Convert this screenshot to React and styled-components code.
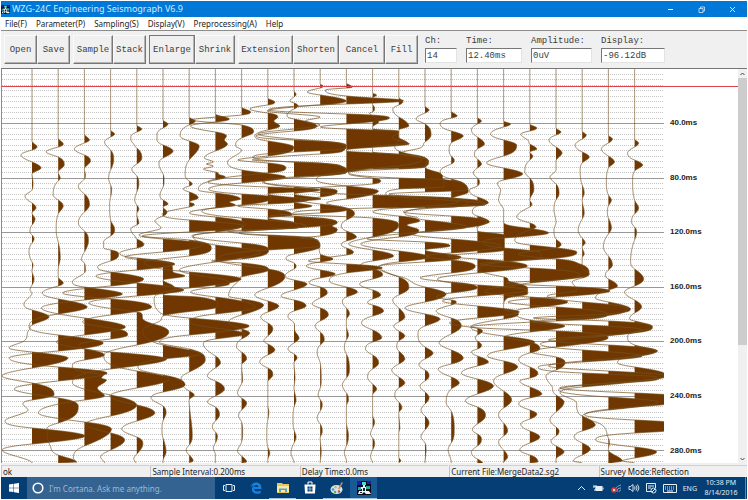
import styled, { createGlobalStyle } from "styled-components";

const GlobalStyle = createGlobalStyle`
    * {
        box-sizing: border-box;
    }

    body {
        margin: 0;
        background: #ffffff;
        font-family: "Noto Sans", "Open Sans", sans-serif;
        color: #222222;
    }

    button, input {
        font: inherit;
        color: inherit;
        border: none;
        margin: 0;
        padding: 0;
        background: none;
        border-radius: 0;
    }
`;

const Window = styled.div`
    min-height: 100vh;
    padding: 1px;
    display: flex;
    flex-direction: column;
`;

const TitleBar = styled.header`
    height: 16px;
    display: flex;
    align-items: center;
    gap: 2px;
    background: #0078d7;
    color: #ffffff;
`;

const Title = styled.h1`
    flex: 1;
    margin: 0;
    font-size: 9px;
    line-height: 16px;
    font-weight: 400;
    color: #d5e9fa;
`;

const WindowButton = styled.button`
    width: 29px;
    height: 16px;
    display: flex;
    align-items: center;
    justify-content: center;
`;

const MenuBar = styled.nav`
    height: 13px;
    display: flex;
    gap: 9px;
    padding-left: 4px;
    background: #ffffff;
`;

const MenuItem = styled.button`
    font-size: 8px;
    line-height: 12px;
`;

const ToolBar = styled.div`
    height: 38px;
    display: flex;
    align-items: flex-start;
    padding: 4px 3px 0;
    background: #f0f0f0;
    border-top: 1px solid #8c8c8c;
    font-family: "Liberation Mono", monospace;
    font-size: 9px;
`;

const ButtonGroup = styled.div`
    display: flex;
    margin-right: 3px;
`;

const ToolButton = styled.button`
    width: ${(props) => props.$width}px;
    height: 29px;
    white-space: nowrap;
    color: #3c3c3c;
    border: 1px solid;
    border-color: ${(props) => (props.$active ? "#777777" : "#fafafa #777777 #777777 #fafafa")};
    box-shadow: inset -1px -1px 0 #b4b4b4;
`;

const Fields = styled.div`
    display: flex;
    gap: 9px;
    margin-left: 4px;
`;

const Field = styled.label`
    display: flex;
    flex-direction: column;
    color: #3c3c3c;
    line-height: 13px;
`;

const FieldInput = styled.input`
    width: ${(props) => props.$width}px;
    height: 15px;
    padding: 0 1px;
    background: #ffffff;
    border: 1px solid;
    border-color: #777777 #e3e3e3 #e3e3e3 #777777;
`;

const Workspace = styled.main`
    flex: 1;
    display: flex;
    border-top: 1px solid #777777;
    border-left: 1px solid #8c8c8c;
`;

const Plot = styled.svg`
    flex: 1;
    min-width: 0;
    display: block;
    align-self: flex-start;
`;

const TimeLabel = styled.text`
    font-family: "Liberation Sans", Arial, sans-serif;
    font-size: 8px;
    font-weight: 700;
    fill: #222222;
`;

const ScrollBar = styled.div`
    width: 9px;
    display: flex;
    flex-direction: column;
    background: #f0f0f0;
`;

const ScrollButton = styled.button`
    height: 9px;
    display: flex;
    align-items: center;
    justify-content: center;
`;

const ScrollTrack = styled.div`
    flex: 1;
`;

const ScrollThumb = styled.div`
    height: 71%;
    background: #cdcdcd;
`;

const StatusBar = styled.footer`
    height: 14px;
    display: grid;
    grid-template-columns: repeat(5, 1fr);
    gap: 1px;
    padding-top: 2px;
    background: #f0f0f0;
`;

const StatusCell = styled.div`
    padding-left: 1px;
    font-size: 8px;
    line-height: 11px;
    white-space: nowrap;
    border-left: 1px solid #c4c4c4;
    border-top: 1px solid #d0d0d0;
`;

const TaskBar = styled.div`
    height: 22px;
    display: flex;
    background: #043e74;
    color: #e6eef5;
`;

const TaskButton = styled.button`
    width: ${(props) => props.$width || 27}px;
    display: flex;
    align-items: center;
    justify-content: center;
    background: ${(props) => (props.$active ? "#175a94" : "transparent")};
    border-bottom: 1px solid ${(props) => (props.$open ? "#9cc4e6" : "transparent")};
`;

const Search = styled.label`
    width: 188px;
    display: flex;
    align-items: center;
    gap: 5px;
    padding-left: 5px;
    background: #356391;
`;

const SearchInput = styled.input`
    flex: 1;
    min-width: 0;
    font-size: 8px;

    &::placeholder {
        color: #9fb8cf;
        opacity: 1;
    }
`;

const Tray = styled.div`
    display: flex;
    align-items: center;
    gap: 6px;
    margin-left: auto;
    font-size: 7px;
`;

const Clock = styled.time`
    width: 36px;
    text-align: center;
    line-height: 10px;
`;

const ShowDesktop = styled.button`
    width: 2px;
    height: 22px;
    border-left: 1px solid #5e86ab;
`;

// one line per channel, "time position:deflection" along the trace
const CHANNELS = [
    "141:0 147:5 150:0 155:-11 162:0 168:9 174:0 183:1 190:0 196:-7 203:0 208:4 213:0 219:3 225:0 232:-2 235:0 239:2 243:0 252:-3 262:0 265:1 271:0 279:2 285:0 290:-2 293:0 304:-8 310:0 317:17 325:0 330:-3 341:-8 348:-23 352:0 358:36 368:0 376:-30 383:0 395:22 400:0 404:-9 410:-4 421:-27 428:0 436:53 444:0 450:-30 463:0",
    "138:0 144:5 147:0 152:-12 157:0 165:6 172:0 178:2 181:0 195:-5 200:0 206:5 214:0 230:-2 242:0 258:2 270:0 277:0 283:5 286:0 293:-16 299:0 307:29 314:0 327:-29 335:0 343:45 351:0 358:-49 367:0 373:49 381:0 389:-44 398:0 407:20 423:0 428:-11 446:-8 455:0 462:18",
    "134:0 140:5 143:0 149:-10 155:0 161:6 169:0 175:1 179:0 186:-6 194:0 199:4 205:5 212:0 223:-6 231:0 241:4 252:0 260:-3 263:0 270:1 273:0 282:-12 287:0 294:38 300:0 308:-43 318:0 327:41 335:0 342:-28 349:0 355:20 360:0 366:-12 372:0 375:19 378:17 380:22 388:13 396:20 400:0 413:-46 422:0 429:27 446:0 458:-11 463:-8",
    "130:0 134:4 137:0 142:-6 150:0 160:3 170:0 178:-2 185:0 190:1 197:0 205:-1 220:0 229:4 236:0 242:-7 248:-7 250:0 254:8 261:0 267:-13 272:0 279:33 286:0 293:-48 299:0 307:41 315:0 322:-28 328:0 335:17 339:0 345:-32 352:0 359:56 369:0 383:-38 395:0 405:26 416:0 424:-25 433:0 440:14 450:0 457:-10 463:-6",
    "125:0 129:5 132:0 137:-6 143:-4 148:0 158:5 164:0 169:-5 176:0 184:2 192:0 200:-2 205:0 209:2 214:0 223:2 225:0 229:-6 236:-2 239:0 244:7 248:0 253:-17 258:0 264:38 270:0 276:-41 283:0 290:47 296:0 303:-48 312:0 314:5 319:6 325:20 332:32 345:0 355:-33 371:0 379:33 388:0 396:-27 405:0 413:18 421:0 429:-15 437:0 444:6 454:0 459:-3 463:-1",
    "120:0 124:5 128:0 134:-6 139:-6 145:0 151:10 158:0 164:-4 174:0 180:1 187:0 195:-3 200:0 204:5 207:0 212:4 216:0 221:-8 228:-2 235:-24 239:0 244:40 252:0 257:-38 262:0 266:9 272:10 276:22 280:0 285:9 290:12 295:0 297:35 305:55 310:40 316:0 321:-3 330:-20 345:0 354:38 359:0 368:-25 375:0 385:22 392:0 398:-12 406:0 413:3 421:0 430:-1 438:0 452:3 461:0",
    "117:0 121:6 125:0 136:-9 141:0 146:10 160:0 175:-4 181:0 184:3 186:0 189:-6 192:0 198:9 202:0 204:5 207:0 214:-27 220:0 226:55 232:0 236:-47 240:0 248:22 256:0 262:-45 272:0 279:52 288:0 299:-35 312:-30 318:0 326:60 335:0 342:-30 349:0 360:16 372:0 378:-8 391:0 395:5 400:0 435:3 445:0 450:-3 455:0 461:4",
    "114:0 119:14 122:0 126:-25 132:0 136:11 140:9 144:12 151:0 158:-11 162:-2 164:-9 166:-2 168:-9 169:-12 172:0 175:5 177:10 180:0 190:-17 193:0 199:25 202:14 205:20 208:0 213:-26 217:0 224:30 232:0 236:-22 245:0 252:45 262:0 270:-36 278:0 284:14 287:0 292:-25 297:0 307:40 314:0 322:-25 328:0 334:30 339:0 344:-12 356:0 363:5 368:0 376:-8 381:0 389:9 396:0 402:-8 407:0 415:4 421:0 427:-3 432:0 436:2 443:0 448:-2 455:0",
    "107:0 112:9 115:0 120:-50 125:0 132:12 138:0 146:-6 150:0 162:-14 170:0 177:44 183:0 189:-33 194:0 197:30 205:0 211:-40 218:0 226:65 231:0 236:-50 243:0 250:27 259:0 261:-30 263:0 270:27 277:0 283:-5 296:-13 299:0 305:22 315:0 322:-13 329:0 333:8 339:0 347:-5 352:0 359:5 365:0 380:1 393:-4 398:0 403:5 410:0 416:-3 422:0 432:1 442:0 451:-4 456:0 462:5",
    "98:0 102:7 105:0 109:-18 113:0 117:10 121:6 126:12 130:0 136:-13 141:0 147:26 156:0 160:-30 163:0 168:18 173:0 182:-60 187:0 190:50 194:0 200:40 204:0 206:-30 209:0 215:24 218:0 222:25 228:30 231:-40 235:0 238:45 246:52 250:0 260:-50 269:0 277:17 288:0 295:-13 301:0 306:11 312:0 317:-7 323:0 329:5 336:0 341:-4 344:0 350:7 355:0 362:-8 368:0 375:5 382:0 405:0 412:1 420:0 435:-1 447:0 453:2 460:0",
    "91:0 94:2 97:0 101:-4 103:0 106:4 109:0 116:-7 119:0 126:23 131:0 136:-38 140:0 143:45 148:52 152:0 157:-41 162:0 165:45 173:52 177:0 182:-30 187:0 190:26 194:0 199:27 202:0 206:18 209:0 212:-15 216:0 222:43 228:0 233:-55 237:0 240:22 247:26 254:0 259:-8 263:0 267:2 269:0 276:-9 280:0 284:13 290:0 296:-13 300:0 306:12 311:0 317:-6 323:0 331:1 338:5 343:0 349:-6 354:0 358:3 363:0 378:1 388:0 400:2 407:0 420:-1 430:0 437:2 443:0 453:-3 463:0",
    "84:0 86:3 88:0 92:-13 95:0 101:26 105:0 111:-53 117:0 121:-15 125:0 134:-62 141:0 145:26 150:24 154:0 160:-68 163:0 171:27 176:0 182:-58 188:0 191:17 197:0 200:-20 204:0 209:27 213:0 216:-50 218:0 223:17 226:12 229:17 236:0 238:-20 240:-2 254:0 259:13 262:0 266:-14 270:0 274:15 278:0 283:-11 287:0 293:7 298:0 304:-8 308:0 315:8 321:0 326:-5 332:0 340:4 345:0 353:-3 363:0 380:1 388:0 395:-2 404:2 411:0 418:-3 424:0 432:2 438:0 452:1 463:0",
    "83:0 87:6 88:0 90:-21 96:0 99:45 101:57 104:0 110:-78 114:0 118:43 124:0 127:-26 129:0 132:52 138:46 144:63 150:0 151:0 154:50 160:75 168:30 172:0 180:-30 186:0 191:32 199:0 203:-20 208:0 214:8 220:0 226:-5 231:0 237:10 241:0 245:-5 248:0 252:7 255:0 261:-38 264:0 268:36 273:0 281:-17 287:0 292:11 297:0 302:-4 308:0 314:3 320:0 326:0 335:2 340:0 348:-2 354:0 370:3 378:0 385:-4 393:0 400:2 406:0 422:0 435:2 446:0 453:-2 461:0",
    "93:0 95:4 98:0 104:0 108:2 112:0 113:-3 116:0 122:6 127:0 129:0 131:26 137:26 143:35 147:0 152:0 156:45 162:56 167:52 169:0 171:-24 174:-24 178:0 181:8 184:0 189:-66 195:0 198:80 203:95 207:80 208:0 214:-80 218:0 225:26 237:0 244:-24 250:0 256:21 261:0 265:-12 269:0 275:10 279:0 284:-13 290:0 295:8 299:0 303:-5 305:0 311:11 316:0 323:-11 330:0 338:9 342:0 349:-7 355:0 363:6 369:0 377:-5 384:0 389:4 395:0 415:0 422:2 428:0 434:-2 438:0 444:2 450:0 457:-2 463:0",
    "97:0 102:4 105:0 109:-6 117:0 126:10 130:0 140:0 146:-4 151:0 155:16 160:28 167:26 169:0 172:-50 178:0 180:45 187:45 189:0 194:-13 197:0 202:60 208:0 212:-26 216:0 221:21 225:8 230:20 237:0 244:-38 251:0 257:30 262:0 268:-20 277:0 288:10 295:0 300:-6 308:0 317:6 322:0 326:-5 331:0 336:6 341:0 346:-2 351:0 359:6 364:0 370:-7 377:0 383:6 388:0 396:-4 402:0 408:3 413:0 428:1 433:0 457:0 461:2",
    "106:0 110:4 113:0 119:-9 124:0 135:6 142:0 148:-5 153:-24 160:3 167:0 172:12 175:17 179:18 182:36 190:42 192:0 194:-36 197:0 200:50 205:60 208:0 214:-20 217:-10 220:0 227:42 232:0 239:-58 242:0 246:25 250:0 257:36 262:0 266:-46 277:-24 287:0 294:21 302:0 308:-20 314:0 319:15 326:0 334:-7 347:0 353:8 359:0 365:-6 370:0 376:4 381:0 386:-5 392:0 398:4 404:0 410:-4 416:0 423:4 430:0 437:-4 443:0 450:1 463:0",
    "111:0 116:6 118:0 124:-11 131:0 136:12 143:0 150:-2 156:0 160:3 164:0 171:-11 179:0 183:12 192:17 199:0 204:35 207:0 212:-48 216:0 222:35 229:0 234:-40 239:0 246:50 253:0 256:-25 260:0 266:24 273:0 278:-31 282:0 288:26 293:0 297:-15 300:0 302:5 305:0 311:-15 318:0 326:10 334:0 343:-12 350:0 358:12 364:0 369:-13 377:0 383:8 389:0 403:-5 411:0 430:3 443:0 450:-3 462:0",
    "117:0 121:4 124:0 130:-6 137:0 144:7 149:0 155:-3 159:0 164:4 168:0 173:-4 178:0 182:2 186:0 190:-8 197:0 203:11 206:0 212:-5 216:0 222:12 227:0 231:0 235:27 250:27 253:0 256:-30 259:0 266:50 273:0 279:-40 285:0 290:50 296:0 301:-35 306:0 312:42 318:0 323:-28 327:-8 331:5 335:0 338:-2 341:0 345:4 349:0 352:-6 356:0 362:11 366:0 373:-16 379:0 386:16 394:0 401:-12 407:0 416:8 424:0 430:-5 434:0 439:4 446:0 452:-6 459:0 463:5",
    "121:0 124:7 127:0 134:-13 140:0 145:13 156:0 163:-17 168:0 174:19 180:0 184:-6 190:-3 200:-5 210:0 222:0 227:15 233:45 238:0 242:-20 248:0 252:35 258:38 262:0 270:-25 277:0 282:8 288:24 294:24 298:4 306:0 309:0 314:15 319:0 327:-33 336:0 342:31 350:0 356:-16 361:0 367:14 374:0 381:-10 391:0 400:8 408:0 415:-5 423:0 431:4 436:0 442:-5 450:0 457:4 463:0",
    "124:0 128:7 131:0 134:-9 140:-2 144:0 149:7 152:0 156:3 160:0 172:-5 178:0 190:4 200:0 204:2 207:0 217:-13 223:0 227:6 230:0 240:-15 245:0 252:47 260:0 264:-50 268:0 275:50 283:0 286:-20 292:-45 297:0 302:38 308:0 312:-15 320:0 326:35 332:0 337:-25 342:0 349:10 353:0 360:-11 367:0 373:8 378:0 381:-10 387:0 394:12 398:0 404:-11 410:0 414:7 419:0 424:-9 431:0 437:10 443:0 450:-10 455:0 462:8",
    "128:0 132:5 135:0 140:-7 147:0 153:6 161:0 170:0 177:-6 184:0 194:3 200:0 210:-2 222:0 230:-2 239:0 244:5 248:0 254:-38 259:0 264:24 273:33 280:0 283:-50 286:0 291:54 297:0 302:-48 307:0 314:52 321:0 327:-85 331:0 338:52 347:0 352:-25 357:0 363:9 370:0 376:-10 385:-5 395:0 402:8 412:0 420:-6 427:0 431:3 436:0 441:-5 446:0 452:8 459:0",
    "131:0 135:4 139:0 145:-7 152:0 157:7 163:0 170:-2 185:0 193:2 200:0 213:2 219:0 230:-4 238:0 243:3 247:0 254:2 258:0 268:0 274:7 278:0 282:-10 290:-5 296:-35 302:0 308:45 318:0 322:-50 325:0 330:60 338:0 344:-42 350:0 356:60 362:0 367:-44 373:0 377:75 387:0 393:-22 402:-6 410:-5 416:0 425:13 431:0 437:-8 443:0 449:8 455:0 461:-9",
    "135:0 139:4 143:0 149:-7 156:0 162:6 168:0 182:-2 195:0 200:3 206:0 212:-1 218:0 228:3 234:0 247:-5 256:0 265:4 270:0 275:-3 279:0 286:9 290:0 298:-13 302:0 309:22 314:0 318:-75 321:0 327:44 335:0 340:-60 345:0 351:48 359:0 366:-60 371:0 376:60 383:0 390:-50 397:0 402:50 410:0 416:-26 424:-8 438:0 443:1 450:0 461:14 463:3",
    "139:0 143:4 147:0 153:-7 160:0 165:8 171:0 180:-2 200:0 208:4 214:0 222:-3 227:0 232:2 240:0 262:-4 269:0 279:9 286:0 292:-10 300:0 307:7 313:0 319:-5 321:0 327:17 332:0 337:-7 345:0 351:23 356:0 363:-17 367:0 374:30 378:26 382:0 388:-75 393:0 397:50 402:45 407:0 415:-50 420:0 423:40 430:40 433:0 440:-39 447:0 452:22 458:0 461:-12",
];

const TOP = 69;
const BOTTOM = 463;

const parse = (line) => {
    const points = line.split(" ").map((pair) => pair.split(":").map(Number));
    const last = points[points.length - 1];
    return [[TOP, 0], ...points, ...(last[0] < BOTTOM ? [[BOTTOM, 0]] : [])];
};

// monotone cubic, so that no swing overshoots its peak
const sample = (points) => {
    const slope = points.slice(1).map((p, i) => (p[1] - points[i][1]) / (p[0] - points[i][0]));
    const tangent = points.map((p, i) => {
        const a = slope[i - 1];
        const b = slope[i];
        if (a === undefined || b === undefined || a * b <= 0) return 0;
        const steepest = Math.max(Math.abs(a), Math.abs(b)) * 1.6;
        const limit = Math.min(Math.abs(a), Math.abs(b)) * 3;
        return Math.sign(a) * Math.min(steepest, limit);
    });
    const result = [];
    for (let i = 0; i < slope.length; i++) {
        const [y0, v0] = points[i];
        const [y1, v1] = points[i + 1];
        const h = y1 - y0;
        const steps = Math.max(2, h * 3);
        for (let s = 0; s < steps; s++) {
            const t = s / steps;
            const t2 = t * t;
            const t3 = t2 * t;
            const v =
                (2 * t3 - 3 * t2 + 1) * v0 +
                (t3 - 2 * t2 + t) * h * tangent[i] +
                (3 * t2 - 2 * t3) * v1 +
                (t3 - t2) * h * tangent[i + 1];
            result.push([y0 + t * h, v]);
        }
    }
    result.push(points[points.length - 1]);
    return result;
};

const toPath = (x, samples) =>
    "M" + samples.map(([y, v]) => `${(x + v).toFixed(1)} ${y.toFixed(1)}`).join("L");

const traces = CHANNELS.map((line, i) => {
    const x = 32 + i * 26.2;
    const samples = sample(parse(line));
    return {
        wave: toPath(x, samples),
        fill: toPath(x, samples.map(([y, v]) => [y, Math.max(v, 0)])) + `L${x} ${BOTTOM}Z`,
    };
});

const gridLines = Array.from({ length: 72 }, (_, i) => ({
    y: Math.round(123 + (i - 9) * 5.45) + 0.5,
    major: (i - 9) % 10 === 0 && i >= 9,
})).filter((line) => line.y > 72 && line.y < BOTTOM);

const timeMarks = [40, 80, 120, 160, 200, 240, 280];

const Seismogram = () => (
    <Plot viewBox="2 69 736 394" role="img" aria-label="Seismic traces">
        <defs>
            <clipPath id="plotArea">
                <rect x="2" y="69" width="662" height="394" />
            </clipPath>
        </defs>
        <g clipPath="url(#plotArea)">
            {gridLines.map((line) => (
                <line
                    key={line.y}
                    x1="2"
                    x2="664"
                    y1={line.y}
                    y2={line.y}
                    stroke={line.major ? "#989898" : "#c4c4c4"}
                    strokeDasharray={line.major ? "none" : "1 1"}
                />
            ))}
            {traces.map((trace, i) => (
                <path key={i} d={trace.fill} fill="#703800" />
            ))}
            {traces.map((trace, i) => (
                <path key={i} d={trace.wave} fill="none" stroke="#745020" strokeWidth="0.7" />
            ))}
        </g>
        <line x1="2" x2="738" y1="86.5" y2="86.5" stroke="#e0414b" />
        {timeMarks.map((time, i) => (
            <TimeLabel key={time} x="670" y={125 + Math.round(i * 54.6)}>
                {time}.0ms
            </TimeLabel>
        ))}
    </Plot>
);

const AppIcon = ({ size }) => (
    <svg width={size} height={size} viewBox="0 0 14 14" aria-hidden="true">
        <rect width="14" height="14" fill="#050c18" />
        <path d="M0 0h4v4H0zM10 0h4v3h-4z" fill="#1420b0" />
        <path d="M5 1h4v3H5z" fill="#58d4d0" />
        <path d="M6 4h2v2h4l1 2H9v2h3l2 3H9l-2-2-2 2H1l1-3h3V8H3V6h3z" fill="#e8f4f4" />
        <path d="M1 6h3v3H1zM9 5h4v3H9z" fill="#26a69a" />
        <path d="M6 7h2v3H6zM3 11h2v1H3z" fill="#112233" />
    </svg>
);

const icon = { fill: "none", stroke: "#e6eef5", strokeWidth: 1 };

const App = () => {
    return (
        <>
            <GlobalStyle />
            <Window>
                <TitleBar>
                    <AppIcon size={9} />
                    <Title>WZG-24C Engineering Seismograph V6.9</Title>
                    <WindowButton aria-label="Minimize">
                        <svg width="7" height="7" viewBox="0 0 7 7">
                            <path d="M1 3.5h5" stroke="#fff" />
                        </svg>
                    </WindowButton>
                    <WindowButton aria-label="Restore">
                        <svg width="7" height="7" viewBox="0 0 7 7" fill="none" stroke="#d5e9fa" strokeWidth="0.8">
                            <path d="M1 2.5h4v4H1zM2.5 2.5V1h4v4H5" />
                        </svg>
                    </WindowButton>
                    <WindowButton aria-label="Close">
                        <svg width="7" height="7" viewBox="0 0 7 7">
                            <path d="M1 1l5 5M6 1L1 6" stroke="#fff" strokeWidth="0.8" />
                        </svg>
                    </WindowButton>
                </TitleBar>

                <MenuBar>
                    <MenuItem>File(F)</MenuItem>
                    <MenuItem>Parameter(P)</MenuItem>
                    <MenuItem>Sampling(S)</MenuItem>
                    <MenuItem>Display(V)</MenuItem>
                    <MenuItem>Preprocessing(A)</MenuItem>
                    <MenuItem>Help</MenuItem>
                </MenuBar>

                <ToolBar>
                    <ButtonGroup>
                        <ToolButton $width={33}>Open</ToolButton>
                        <ToolButton $width={33}>Save</ToolButton>
                    </ButtonGroup>
                    <ButtonGroup>
                        <ToolButton $width={40}>Sample</ToolButton>
                        <ToolButton $width={33}>Stack</ToolButton>
                    </ButtonGroup>
                    <ButtonGroup>
                        <ToolButton $width={46} $active>Enlarge</ToolButton>
                        <ToolButton $width={40}>Shrink</ToolButton>
                    </ButtonGroup>
                    <ButtonGroup>
                        <ToolButton $width={55}>Extension</ToolButton>
                        <ToolButton $width={46}>Shorten</ToolButton>
                        <ToolButton $width={46}>Cancel</ToolButton>
                        <ToolButton $width={33}>Fill</ToolButton>
                    </ButtonGroup>
                    <Fields>
                        <Field>
                            Ch:
                            <FieldInput $width={32} defaultValue="14" />
                        </Field>
                        <Field>
                            Time:
                            <FieldInput $width={56} defaultValue="12.40ms" />
                        </Field>
                        <Field>
                            Amplitude:
                            <FieldInput $width={61} defaultValue="0uV" />
                        </Field>
                        <Field>
                            Display:
                            <FieldInput $width={64} defaultValue="-96.12dB" />
                        </Field>
                    </Fields>
                </ToolBar>

                <Workspace>
                    <Seismogram />
                    <ScrollBar>
                        <ScrollButton aria-label="Scroll up">
                            <svg width="5" height="4" viewBox="0 0 5 4">
                                <path d="M0.5 3l2-2 2 2" fill="none" stroke="#444" />
                            </svg>
                        </ScrollButton>
                        <ScrollTrack>
                            <ScrollThumb />
                        </ScrollTrack>
                        <ScrollButton aria-label="Scroll down">
                            <svg width="5" height="4" viewBox="0 0 5 4">
                                <path d="M0.5 1l2 2 2-2" fill="none" stroke="#444" />
                            </svg>
                        </ScrollButton>
                    </ScrollBar>
                </Workspace>

                <StatusBar>
                    <StatusCell>ok</StatusCell>
                    <StatusCell>Sample Interval:0.200ms</StatusCell>
                    <StatusCell>Delay Time:0.0ms</StatusCell>
                    <StatusCell>Current File:MergeData2.sg2</StatusCell>
                    <StatusCell>Survey Mode:Reflection</StatusCell>
                </StatusBar>

                <TaskBar>
                    <TaskButton $width={26} aria-label="Start">
                        <svg width="10" height="10" viewBox="0 0 10 10" fill="#fff">
                            <path d="M0 1.5l4.5-.7v3.9H0zM5 .7L10 0v4.7H5zM0 5.2h4.5v3.9L0 8.5zM5 5.2h5V10l-5-.8z" />
                        </svg>
                    </TaskButton>
                    <Search>
                        <svg width="12" height="12" viewBox="0 0 12 12">
                            <circle cx="6" cy="6" r="4.8" fill="none" stroke="#fff" strokeWidth="1.6" />
                        </svg>
                        <SearchInput aria-label="Search" placeholder="I'm Cortana. Ask me anything." />
                    </Search>
                    <TaskButton aria-label="Task view">
                        <svg width="12" height="10" viewBox="0 0 12 10" {...icon}>
                            <path d="M3 1.5h6v7H3zM2 2.5H.5v5H2M10 2.5h1.5v5H10" />
                        </svg>
                    </TaskButton>
                    <TaskButton aria-label="Edge">
                        <svg width="12" height="12" viewBox="0 0 12 12">
                            <path d="M.6 5.4C1 2 3.400 .4 6.200 .4c3.300 0 5.200 2.400 5.200 5.300v1.200H4.200c.1 1.700 1.500 2.500 3.300 2.500 1.200 0 2.300-.3 3.200-.8v2.300c-1 .6-2.300.9-3.800.9-3 0-5-1.800-5-4.600 0-1.800 1-3.200 2.500-4C2.600 3.500 1.400 4.200.6 5.400zM4.300 5h4c0-1.200-.7-2-1.900-2S4.500 3.800 4.300 5z" fill="#1681dc" />
                        </svg>
                    </TaskButton>
                    <TaskButton $open aria-label="File Explorer">
                        <svg width="12" height="10" viewBox="0 0 12 10">
                            <path d="M0 0h5l1 1h6v9H0z" fill="#e9c65b" />
                            <path d="M0 3h12v6H0z" fill="#fbe9a0" />
                            <path d="M2 9V5.500h8V9H8V7H4v2z" fill="#4aa6dc" />
                        </svg>
                    </TaskButton>
                    <TaskButton aria-label="Store">
                        <svg width="12" height="13" viewBox="0 0 12 13">
                            <path d="M4 3.500V1h4v2.500" fill="none" stroke="#fff" />
                            <path d="M.5 3.500h11L11 12.500H1z" fill="#fff" />
                            <path d="M3.500 5.500h2.200v2.200H3.500zM6.300 5.500h2.200v2.200H6.300zM3.500 8.300h2.200v2.200H3.500zM6.300 8.300h2.200v2.200H6.300z" fill="#043e74" />
                        </svg>
                    </TaskButton>
                    <TaskButton $open aria-label="Paint">
                        <svg width="14" height="14" viewBox="0 0 14 14">
                            <ellipse cx="6.500" cy="8.500" rx="6" ry="4.600" fill="#d5e2ea" />
                            <circle cx="3" cy="8.500" r="1.300" fill="#3e9ad6" />
                            <circle cx="5" cy="11" r="1.200" fill="#62a844" />
                            <circle cx="9" cy="10.500" r="1.200" fill="#c44f3a" />
                            <circle cx="5.500" cy="6.200" r="1.200" fill="#e0b23c" />
                            <path d="M8 8l3.500-7 1.500.8L9.200 8.500z" fill="#c08a50" />
                        </svg>
                    </TaskButton>
                    <TaskButton $open $active aria-label="Seismograph">
                        <AppIcon size={14} />
                    </TaskButton>

                    <Tray>
                        <svg width="9" height="6" viewBox="0 0 9 6" {...icon}>
                            <path d="M1 5l3.500-3.500L8 5" />
                        </svg>
                        <svg width="12" height="9" viewBox="0 0 12 9">
                            <path d="M3.500 2h7v5h-7z" fill="#e6eef5" />
                            <path d="M11 3.500v2M2 1v2M4 1v2M1 3h4v2H3v2" fill="none" stroke="#e6eef5" />
                        </svg>
                        <svg width="12" height="10" viewBox="0 0 12 10">
                            <path d="M5 9C5 5 7 3 11 2M7 9c0-3 1-4 4-4M9 9c0-1 1-2 2-2" fill="none" stroke="#8ba9c5" />
                            <circle cx="4" cy="7" r="2.800" fill="#d93a3a" />
                            <path d="M3 6l2 2M5 6L3 8" stroke="#fff" strokeWidth="0.8" />
                        </svg>
                        <svg width="12" height="10" viewBox="0 0 12 10" {...icon} strokeWidth="0.9">
                            <path d="M1 3.500h1.500L5 1.500v7L2.500 6.500H1zM6.500 3.500q1 1.500 0 3M8 2.500q2 2.500 0 5M9.500 1.500q3 3.500 0 7" />
                        </svg>
                        <svg width="11" height="11" viewBox="0 0 11 11" {...icon}>
                            <path d="M5 8.500H.5v-8h9V5M2 3h6M2 5h3" />
                            <circle cx="7.500" cy="7.500" r="2.500" />
                            <path d="M6 9l3-3" />
                        </svg>
                        <svg width="14" height="9" viewBox="0 0 14 9" {...icon}>
                            <path d="M.5.5h13v8H.5z" />
                            <path d="M2 3h10M2 5h10" strokeDasharray="1 1" />
                            <path d="M4 7h6" />
                        </svg>
                        <span>ENG</span>
                        <Clock>
                            10:38 PM
                            <br />
                            8/14/2016
                        </Clock>
                        <ShowDesktop aria-label="Show desktop" />
                    </Tray>
                </TaskBar>
            </Window>
        </>
    );
};

export default App;
